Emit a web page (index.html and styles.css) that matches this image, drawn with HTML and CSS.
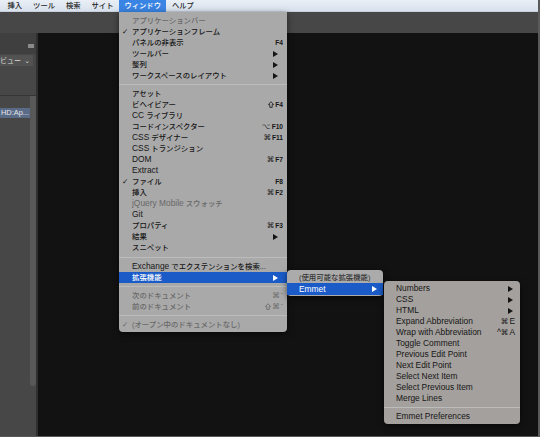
FILE: index.html
```html
<!DOCTYPE html>
<html lang="ja">
<head>
<meta charset="utf-8">
<title>Window menu</title>
<link rel="stylesheet" href="styles.css">
</head>
<body>
<div class="screen">
  <div class="menubar">
    <span class="mb-item">挿入</span>
    <span class="mb-item">ツール</span>
    <span class="mb-item">検索</span>
    <span class="mb-item">サイト</span>
    <span class="mb-item active">ウィンドウ</span>
    <span class="mb-item">ヘルプ</span>
  </div>
  <div class="toolbar"></div>
  <div class="workspace">
    <div class="sidepanel">
      <div class="panel-head"><span class="panel-icon"></span></div>
      <div class="panel-select"><span>ビュー</span><span class="chev">⌄</span></div>
      <div class="panel-gap"></div>
      <div class="panel-rule"></div>
      <div class="panel-list">
        <div class="list-main">
          <div class="list-row">HD:Ap...</div>
        </div>
        <div class="list-scroll"></div>
      </div>
    </div>
    <div class="canvas"></div>
  </div>

  <div class="menu main-menu">
    <div class="item disabled"><span class="check"></span><span class="label">アプリケーションバー</span></div>
    <div class="item"><span class="check">✓</span><span class="label">アプリケーションフレーム</span></div>
    <div class="item"><span class="check"></span><span class="label">パネルの非表示</span><span class="sc">F4</span></div>
    <div class="item"><span class="check"></span><span class="label">ツールバー</span><span class="arrow"></span></div>
    <div class="item"><span class="check"></span><span class="label">整列</span><span class="arrow"></span></div>
    <div class="item"><span class="check"></span><span class="label">ワークスペースのレイアウト</span><span class="arrow"></span></div>
    <div class="sep"></div>
    <div class="item"><span class="check"></span><span class="label">アセット</span></div>
    <div class="item"><span class="check"></span><span class="label">ビヘイビアー</span><span class="sc"><svg class="shift" width="6" height="7" viewBox="0 0 6 7"><path d="M3 0.7 L5.6 3.6 H4.2 V6.4 H1.8 V3.6 H0.4 Z" fill="none" stroke="currentColor" stroke-width="0.8" stroke-linejoin="round"/></svg>F4</span></div>
    <div class="item"><span class="check"></span><span class="label"><span class="en">CC</span> ライブラリ</span></div>
    <div class="item"><span class="check"></span><span class="label">コードインスペクター</span><span class="sc"><span class="mod">⌥</span>F10</span></div>
    <div class="item"><span class="check"></span><span class="label"><span class="en">CSS</span> デザイナー</span><span class="sc"><span class="mod">⌘</span>F11</span></div>
    <div class="item"><span class="check"></span><span class="label"><span class="en">CSS</span> トランジション</span></div>
    <div class="item"><span class="check"></span><span class="label en">DOM</span><span class="sc"><span class="mod">⌘</span>F7</span></div>
    <div class="item"><span class="check"></span><span class="label en">Extract</span></div>
    <div class="item"><span class="check">✓</span><span class="label">ファイル</span><span class="sc">F8</span></div>
    <div class="item"><span class="check"></span><span class="label">挿入</span><span class="sc"><span class="mod">⌘</span>F2</span></div>
    <div class="item disabled"><span class="check"></span><span class="label"><span class="en">jQuery Mobile</span> スウォッチ</span></div>
    <div class="item"><span class="check"></span><span class="label en">Git</span></div>
    <div class="item"><span class="check"></span><span class="label">プロパティ</span><span class="sc"><span class="mod">⌘</span>F3</span></div>
    <div class="item"><span class="check"></span><span class="label">結果</span><span class="arrow"></span></div>
    <div class="item"><span class="check"></span><span class="label">スニペット</span></div>
    <div class="sep sep-wide"></div>
    <div class="item"><span class="check"></span><span class="label"><span class="en">Exchange</span> でエクステンションを検索...</span></div>
    <div class="item hl"><span class="check"></span><span class="label">拡張機能</span><span class="arrow"></span></div>
    <div class="sep"></div>
    <div class="item disabled"><span class="check"></span><span class="label">次のドキュメント</span><span class="sc"><span class="mod">⌘</span>`</span></div>
    <div class="item disabled"><span class="check"></span><span class="label">前のドキュメント</span><span class="sc"><svg class="shift" width="6" height="7" viewBox="0 0 6 7"><path d="M3 0.7 L5.6 3.6 H4.2 V6.4 H1.8 V3.6 H0.4 Z" fill="none" stroke="currentColor" stroke-width="0.8" stroke-linejoin="round"/></svg><span class="mod">⌘</span>`</span></div>
    <div class="sep"></div>
    <div class="item disabled"><span class="check">✓</span><span class="label">(オープン中のドキュメントなし)</span></div>
  </div>

  <div class="menu sub1">
    <div class="item sub-row dim"><span class="label">(使用可能な拡張機能)</span></div>
    <div class="item sub-row hl"><span class="label en">Emmet</span><span class="arrow"></span></div>
  </div>

  <div class="menu sub2">
    <div class="item"><span class="label">Numbers</span><span class="arrow"></span></div>
    <div class="item"><span class="label">CSS</span><span class="arrow"></span></div>
    <div class="item"><span class="label">HTML</span><span class="arrow"></span></div>
    <div class="item"><span class="label">Expand Abbreviation</span><span class="sc2"><span class="mod">⌘</span>E</span></div>
    <div class="item"><span class="label">Wrap with Abbreviation</span><span class="sc2">^<span class="mod">⌘</span>A</span></div>
    <div class="item"><span class="label">Toggle Comment</span></div>
    <div class="item"><span class="label">Previous Edit Point</span></div>
    <div class="item"><span class="label">Next Edit Point</span></div>
    <div class="item"><span class="label">Select Next Item</span></div>
    <div class="item"><span class="label">Select Previous Item</span></div>
    <div class="item"><span class="label">Merge Lines</span></div>
    <div class="sep"></div>
    <div class="item"><span class="label">Emmet Preferences</span></div>
  </div>
</div>
</body>
</html>
```

FILE: styles.css
```css
* { box-sizing: border-box; }

html, body {
  margin: 0;
  padding: 0;
  background: #121212;
}

.screen {
  position: relative;
  width: 540px;
  height: 437px;
  overflow: hidden;
  background: #121212;
  border-right: 2px solid #5a5a5a;
  border-bottom: 1px solid #5a5a5a;
}

/* ---------- menu bar ---------- */
.menubar {
  display: flex;
  height: 12px;
  padding-left: 2px;
  background: linear-gradient(#eaeff6, #d8e1ec);
  border-bottom: 1px solid #c7d0dc;
  font-family: "Noto Sans CJK JP", sans-serif;
  font-size: 7.3px;
  font-weight: 500;
  color: #1e1e1e;
}

.mb-item {
  padding: 0 5.5px;
  line-height: 11px;
  height: 12px;
}

.mb-item.active {
  background: #3a84e4;
  color: #ffffff;
}

.toolbar {
  height: 21px;
  background: #474747;
}

/* ---------- workspace ---------- */
.workspace {
  display: flex;
  height: 403px;
}

.sidepanel {
  width: 38px;
  flex: none;
  display: flex;
  flex-direction: column;
  background: #474747;
  border-right: 2px solid #2f2f2f;
}

.panel-head {
  height: 21px;
  padding: 11px 0 0 28px;
  background: #3f3f3f;
}

.panel-icon {
  display: block;
  width: 6px;
  height: 4px;
  background: #8b8b8b;
}

.panel-select {
  display: flex;
  justify-content: space-between;
  align-items: center;
  width: 33px;
  height: 11px;
  margin-top: 1px;
  padding-right: 3px;
  background: #525252;
  color: #dcdcdc;
  font-family: "Noto Sans CJK JP", sans-serif;
  font-size: 7px;
  line-height: 11px;
}

.chev {
  font-family: "DejaVu Sans", sans-serif;
  font-size: 7px;
  line-height: 6px;
  color: #d0d0d0;
}

.panel-gap {
  height: 29px;
}

.panel-rule {
  height: 1px;
  background: #363636;
}

.panel-list {
  display: flex;
}

.list-main {
  flex: 1;
  padding-top: 12px;
}

.list-row {
  height: 10px;
  background: #5a6b88;
  color: #e8e8e8;
  font-family: "Liberation Sans", sans-serif;
  font-size: 7.4px;
  line-height: 10px;
  white-space: nowrap;
  overflow: hidden;
  padding-left: 1px;
}

.list-scroll {
  width: 6px;
  height: 290px;
  background: #585858;
  border-radius: 0 0 3px 3px;
}

.canvas {
  flex: 1;
  background: #121212;
}

/* ---------- menus ---------- */
.menu {
  position: absolute;
  font-family: "Liberation Sans", "Noto Sans CJK JP", sans-serif;
  font-size: 7.4px;
  font-weight: 500;
  color: #161616;
  box-shadow: 0 2px 6px rgba(0, 0, 0, 0.55);
}

.en {
  font-size: 8.4px;
}

.main-menu {
  left: 119px;
  top: 12px;
  width: 168px;
  padding: 3px 0 2px;
  background: #a9a9a9;
  border-radius: 0 0 4px 4px;
}

.sub1 {
  left: 287px;
  top: 270px;
  width: 96px;
  padding: 1px 0;
  background: #ababab;
  border-radius: 4px;
}

.sub2 {
  left: 384px;
  top: 281px;
  width: 136px;
  padding: 2px 0;
  background: #a4a09d;
  border-radius: 4px;
  font-size: 8.4px;
}

.item {
  display: flex;
  align-items: center;
  height: 11px;
  line-height: 11px;
  padding: 0 4px 0 3px;
  white-space: nowrap;
}

.sub2 .item {
  padding: 0 5px 0 12px;
}

.sub1 .item {
  padding: 0 6px 0 12px;
}

.sub-row {
  height: 12px;
}

.check {
  width: 10px;
  flex: none;
  font-family: "DejaVu Sans", sans-serif;
  font-weight: bold;
  font-size: 7.6px;
}

.label {
  flex: 1;
}

.disabled {
  color: #686868;
}

.dim {
  color: #353535;
}

.hl {
  background: #1b5bc8;
  color: #ffffff;
}

.sc {
  display: flex;
  align-items: center;
  font-size: 6.6px;
  font-weight: bold;
}

.mod {
  font-family: "DejaVu Sans", sans-serif;
  font-size: 7.6px;
  font-weight: normal;
  margin-right: 1px;
}

.shift {
  display: block;
  margin-right: 1px;
}

.sc2 {
  display: flex;
  align-items: center;
  font-size: 8.4px;
}

.arrow {
  width: 0;
  height: 0;
  margin-right: 5px;
  border-left: 5px solid #141414;
  border-top: 3px solid transparent;
  border-bottom: 3px solid transparent;
}

.sub2 .arrow {
  margin-right: 2px;
}

.sub1 .arrow {
  margin-right: 0;
}

.hl .arrow {
  border-left-color: #ffffff;
}

.sep {
  height: 1px;
  margin: 3px 0;
  background: #bcbcbc;
}

.sep-wide {
  margin: 4px 0 3px;
}
```
